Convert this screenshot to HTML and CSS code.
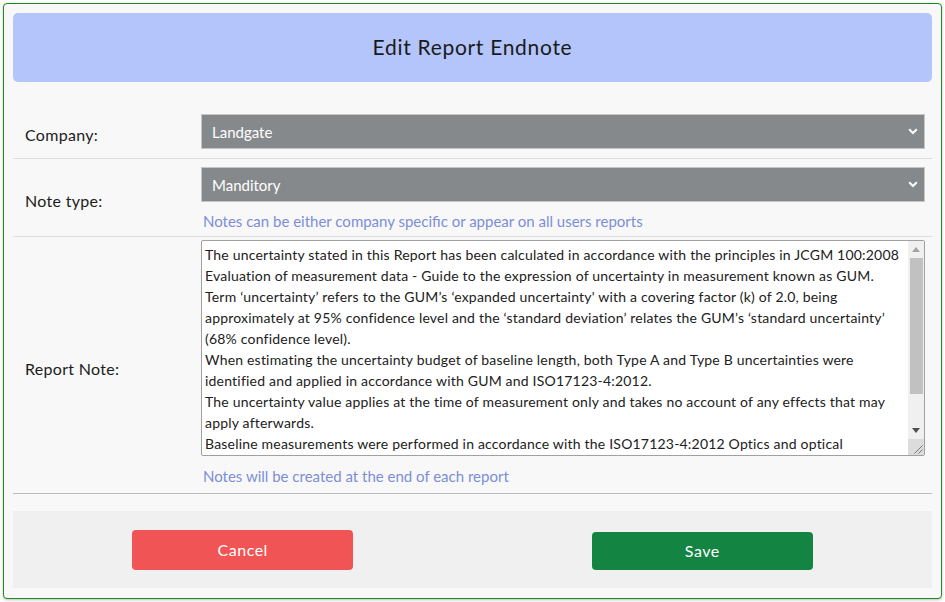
FILE: index.html
```html
<!DOCTYPE html>
<html lang="en">
<head>
<meta charset="utf-8">
<title>Edit Report Endnote</title>
<link rel="stylesheet" href="styles.css">
</head>
<body>
<div class="modal">
  <div class="modal-header">
    <h1 class="modal-title">Edit Report Endnote</h1>
  </div>
  <form class="modal-body">
    <div class="form-row row-company">
      <label class="form-label" for="company">Company:</label>
      <div class="form-field">
        <div class="select-wrap">
          <select id="company" class="select"><option>Landgate</option></select>
          <svg class="chevron" width="10" height="7" viewBox="0 0 10 7"><path d="M1.2 1.3 L5 5 L8.8 1.3" fill="none" stroke="#fff" stroke-width="2"/></svg>
        </div>
      </div>
    </div>
    <div class="form-row row-type">
      <label class="form-label" for="notetype">Note type:</label>
      <div class="form-field">
        <div class="select-wrap">
          <select id="notetype" class="select"><option>Manditory</option></select>
          <svg class="chevron" width="10" height="7" viewBox="0 0 10 7"><path d="M1.2 1.3 L5 5 L8.8 1.3" fill="none" stroke="#fff" stroke-width="2"/></svg>
        </div>
        <p class="help">Notes can be either company specific or appear on all users reports</p>
      </div>
    </div>
    <div class="form-row row-note">
      <label class="form-label" for="note">Report Note:</label>
      <div class="form-field">
        <div class="textbox">
          <textarea id="note" class="textarea">The uncertainty stated in this Report has been calculated in accordance with the principles in JCGM 100:2008
Evaluation of measurement data - Guide to the expression of uncertainty in measurement known as GUM.
Term ‘uncertainty’ refers to the GUM’s ‘expanded uncertainty' with a covering factor (k) of 2.0, being
approximately at 95% confidence level and the ‘standard deviation’ relates the GUM’s ‘standard uncertainty’
(68% confidence level).
When estimating the uncertainty budget of baseline length, both Type A and Type B uncertainties were
identified and applied in accordance with GUM and ISO17123-4:2012.
The uncertainty value applies at the time of measurement only and takes no account of any effects that may
apply afterwards.
Baseline measurements were performed in accordance with the ISO17123-4:2012 Optics and optical
instruments - Field procedures for testing geodetic and surveying instruments - Part 4: Electro-optical
distance meters (EDM measurements to reflectors).</textarea>
          <div class="scrollbar" aria-hidden="true">
            <div class="sb-btn"><svg width="8" height="5" viewBox="0 0 8 5"><path d="M0 5 L4 0 L8 5 Z" fill="#a3a3a3"/></svg></div>
            <div class="sb-thumb"></div>
            <div class="sb-track"></div>
            <div class="sb-btn"><svg width="8" height="5" viewBox="0 0 8 5"><path d="M0 0 L4 5 L8 0 Z" fill="#505050"/></svg></div>
            <div class="sb-corner"><svg width="16" height="16" viewBox="0 0 16 16"><path d="M14.5 6.5 L6.5 14.5 M14.5 10.5 L10.5 14.5" stroke="#7a7a7a" stroke-width="1"/></svg></div>
          </div>
        </div>
        <p class="help help-note">Notes will be created at the end of each report</p>
      </div>
    </div>
  </form>
  <div class="modal-footer">
    <div class="footer-col"><button type="button" class="btn btn-cancel">Cancel</button></div>
    <div class="footer-col"><button type="button" class="btn btn-save">Save</button></div>
  </div>
</div>
</body>
</html>
```
FILE: styles.css
```css
html, body {
  margin: 0;
  padding: 0;
  background: #ffffff;
}
body {
  font-family: Lato, "Open Sans", "Liberation Sans", sans-serif;
  color: #212121;
}
.modal {
  margin: 3px 3px 3px 3px;
  height: 576px;
  border: 1px solid #1e8a22;
  border-radius: 4px;
  background: #f8f8f8;
  padding: 9px;
  box-shadow: 0 1px 3px rgba(0,0,0,0.25);
  display: flex;
  flex-direction: column;
}
.modal-header {
  background: #b3c5fb;
  border-radius: 5px;
  height: 69px;
  display: flex;
  align-items: center;
  justify-content: center;
}
.modal-title {
  margin: 0 0 2px 0;
  font-weight: 400;
  font-size: 21px;
  letter-spacing: 0.7px;
  color: #1a1a1a;
}
.modal-body {
  margin: 18px 0 0 0;
  display: flex;
  flex-direction: column;
}
.form-row {
  display: grid;
  grid-template-columns: 188px 1fr;
  border-bottom: 1px solid #dedede;
  padding-right: 7px;
}
.form-label {
  padding-left: 12px;
  font-size: 16px;
  letter-spacing: 0.3px;
  color: #1c1c1c;
  display: flex;
  align-items: center;
}
.row-company {
  padding-top: 14px;
  padding-bottom: 9px;
}
.row-company .form-label {
  padding-top: 5px;
}
.row-type {
  padding-top: 8px;
  padding-bottom: 6px;
}
.row-type .form-label {
  padding-top: 3px;
}
.row-note {
  padding-top: 3px;
  padding-bottom: 8px;
  border-bottom-color: #bcbcbc;
}
.row-note .form-label {
  padding-top: 12px;
}
.form-field {
  display: flex;
  flex-direction: column;
}
.select-wrap {
  position: relative;
}
.select {
  -webkit-appearance: none;
  appearance: none;
  width: 100%;
  height: 35px;
  margin: 0;
  border: 1px solid #c6c6c6;
  border-radius: 0;
  background: #86898b;
  color: #ffffff;
  font-family: Lato, "Open Sans", "Liberation Sans", sans-serif;
  font-size: 15px;
  padding: 0 10px;
}
.chevron {
  position: absolute;
  right: 7px;
  top: 14px;
}
.help {
  margin: 10px 0 0 2px;
  font-size: 15px;
  line-height: 18px;
  color: #7c8fd6;
}
.help-note {
  margin-top: 11px;
}
.textbox {
  display: flex;
  height: 216px;
  box-sizing: border-box;
  border: 1px solid #a0a0a0;
  border-radius: 2px;
  background: #ffffff;
}
.textarea {
  flex: 1;
  min-width: 0;
  margin: 0;
  border: none;
  outline: none;
  background: transparent;
  color: #212121;
  font-family: Lato, "Open Sans", "Liberation Sans", sans-serif;
  font-size: 14px;
  letter-spacing: 0.2px;
  line-height: 21px;
  padding: 3px 3px 2px 3px;
  overflow: hidden;
  scrollbar-width: none;
  white-space: pre-wrap;
  resize: none;
}
.scrollbar {
  width: 16px;
  display: flex;
  flex-direction: column;
  background: #f0f0f0;
}
.sb-btn {
  height: 17px;
  display: flex;
  align-items: center;
  justify-content: center;
}
.sb-thumb {
  height: 136px;
  margin: 0 1px 0 2px;
  background: #c1c1c1;
}
.sb-track {
  flex: 1;
}
.sb-corner {
  height: 16px;
  background: #dcdcdc;
  display: flex;
}
.modal-footer {
  margin-top: 17px;
  background: #f0f0f0;
  height: 77px;
  display: grid;
  grid-template-columns: 1fr 1fr;
  align-items: center;
}
.footer-col {
  display: flex;
  justify-content: center;
}
.btn {
  width: 221px;
  border: none;
  border-radius: 4px;
  color: #ffffff;
  font-family: Lato, "Open Sans", "Liberation Sans", sans-serif;
  font-size: 16px;
  letter-spacing: 0.5px;
}
.btn-cancel {
  height: 40px;
  background: #f05454;
}
.btn-save {
  height: 38px;
  margin-top: 2px;
  background: #148442;
}
```
